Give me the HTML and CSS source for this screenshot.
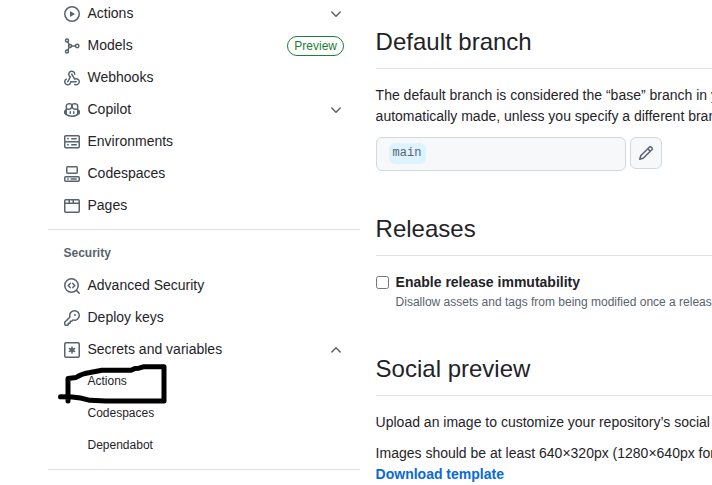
FILE: index.html
```html
<!DOCTYPE html>
<html lang="en">
<head>
<meta charset="utf-8">
<title>Settings</title>
<link rel="stylesheet" href="styles.css">
</head>
<body>
<div class="page">
  <nav class="sidebar">
    <ul class="nav-list">
      <li class="nav-item"><svg class="icon" viewBox="0 0 16 16"><path d="M8 0a8 8 0 1 1 0 16A8 8 0 0 1 8 0ZM1.5 8a6.5 6.5 0 1 0 13 0 6.5 6.5 0 0 0-13 0Zm4.879-2.773 4.264 2.559a.25.25 0 0 1 0 .428l-4.264 2.559A.25.25 0 0 1 6 10.559V5.442a.25.25 0 0 1 .379-.215Z"/></svg><span>Actions</span><svg class="icon chevron line" viewBox="0 0 16 16"><path d="M3.8 6 8 10.2 12.2 6"/></svg></li>
      <li class="nav-item"><svg class="icon line" viewBox="0 0 16 16"><circle cx="3" cy="2.4" r="1.5"/><circle cx="3" cy="13.6" r="1.5"/><circle cx="6" cy="8" r="1.5"/><circle cx="13.2" cy="8" r="1.7"/><path d="M3.7 3.8 5.3 6.6M3.7 12.2 5.3 9.4M7.6 8h3.8"/></svg><span>Models</span><span class="label">Preview</span></li>
      <li class="nav-item"><svg class="icon" viewBox="0 0 16 16"><path d="M5.5 4.25a2.25 2.25 0 0 1 4.5 0 .75.75 0 0 0 1.5 0 3.75 3.75 0 1 0-6.14 2.889l-2.272 4.258a.75.75 0 0 0 1.324.706L7 7.25a.75.75 0 0 0-.309-1.015A2.25 2.25 0 0 1 5.5 4.25Z"/><path d="M7.364 3.607a.75.75 0 0 1 1.03.257l2.608 4.349a3.75 3.75 0 1 1-.628 6.785.75.75 0 0 1 .752-1.299 2.25 2.25 0 1 0-.033-3.88.75.75 0 0 1-1.03-.256L7.107 4.636a.75.75 0 0 1 .257-1.03Z"/><path d="M2.9 8.776A.75.75 0 0 1 2.625 9.8 2.25 2.25 0 1 0 6 11.75a.75.75 0 0 1 .75-.751h5.5a.75.75 0 0 1 0 1.5H7.425a3.75 3.75 0 1 1-5.55-3.998.75.75 0 0 1 1.024.274Z"/></svg><span>Webhooks</span></li>
      <li class="nav-item"><svg class="icon" viewBox="0 0 16 16"><path d="M7.998 15.035c-4.562 0-7.873-2.914-7.998-3.749V9.338c.085-.628.677-1.686 1.588-2.065.013-.07.024-.143.036-.218.029-.183.06-.384.126-.612-.201-.508-.254-1.084-.254-1.656 0-.87.128-1.769.693-2.484.579-.733 1.494-1.124 2.724-1.261 1.206-.134 2.262.034 2.944.765.05.053.096.108.139.165.044-.057.094-.112.143-.165.682-.731 1.738-.899 2.944-.765 1.23.137 2.145.528 2.724 1.261.566.715.693 1.614.693 2.484 0 .572-.053 1.148-.254 1.656.066.228.098.429.126.612.012.076.024.148.037.218.924.385 1.522 1.471 1.591 2.095v1.872c0 .766-3.351 3.795-8.002 3.795Zm0-1.485c2.28 0 4.584-1.11 5.002-1.433V7.862l-.023-.116c-.49.21-1.075.291-1.727.291-1.146 0-2.059-.327-2.71-.991A3.222 3.222 0 0 1 8 6.303a3.24 3.24 0 0 1-.544.743c-.65.664-1.563.991-2.71.991-.652 0-1.236-.081-1.727-.291l-.023.116v4.255c.419.323 2.722 1.433 5.002 1.433ZM6.762 2.83c-.193-.206-.637-.413-1.682-.297-1.019.113-1.479.404-1.713.7-.247.312-.369.789-.369 1.554 0 .793.129 1.171.308 1.371.162.181.519.379 1.442.379.853 0 1.339-.235 1.638-.54.315-.322.527-.827.617-1.553.117-.935-.037-1.395-.241-1.614Zm4.155-.297c-1.044-.116-1.488.091-1.681.297-.204.219-.359.679-.242 1.614.091.726.303 1.231.618 1.553.299.305.784.54 1.638.54.922 0 1.28-.198 1.442-.379.179-.2.308-.578.308-1.371 0-.765-.123-1.242-.37-1.554-.233-.296-.693-.587-1.713-.7Z"/><path d="M6.25 9.037a.75.75 0 0 1 .75.75v1.501a.75.75 0 0 1-1.5 0V9.787a.75.75 0 0 1 .75-.75Zm4.25.75v1.501a.75.75 0 0 1-1.5 0V9.787a.75.75 0 0 1 1.5 0Z"/></svg><span>Copilot</span><svg class="icon chevron line" viewBox="0 0 16 16"><path d="M3.8 6 8 10.2 12.2 6"/></svg></li>
      <li class="nav-item"><svg class="icon" viewBox="0 0 16 16"><path d="M1.75 1h12.5c.966 0 1.75.784 1.75 1.75v4c0 .372-.116.717-.314 1 .198.283.314.628.314 1v4a1.75 1.75 0 0 1-1.75 1.75H1.75A1.75 1.75 0 0 1 0 12.75v-4c0-.358.109-.707.314-1a1.739 1.739 0 0 1-.314-1v-4C0 1.784.784 1 1.75 1ZM1.5 2.75v4c0 .138.112.25.25.25h12.5a.25.25 0 0 0 .25-.25v-4a.25.25 0 0 0-.25-.25H1.75a.25.25 0 0 0-.25.25Zm.25 5.75a.25.25 0 0 0-.25.25v4c0 .138.112.25.25.25h12.5a.25.25 0 0 0 .25-.25v-4a.25.25 0 0 0-.25-.25ZM7 4.75A.75.75 0 0 1 7.75 4h4.5a.75.75 0 0 1 0 1.5h-4.5A.75.75 0 0 1 7 4.75ZM7.75 10h4.5a.75.75 0 0 1 0 1.5h-4.5a.75.75 0 0 1 0-1.5ZM3 4.75A.75.75 0 0 1 3.75 4h.5a.75.75 0 0 1 0 1.5h-.5A.75.75 0 0 1 3 4.75ZM3.75 10h.5a.75.75 0 0 1 0 1.5h-.5a.75.75 0 0 1 0-1.5Z"/></svg><span>Environments</span></li>
      <li class="nav-item"><svg class="icon line" viewBox="0 0 16 16"><rect x="2.75" y=".75" width="10.5" height="6.5" rx="1"/><rect x=".75" y="10.75" width="14.5" height="4.5" rx="1"/><path d="M3.75 13h.5M7.2 13h5"/></svg><span>Codespaces</span></li>
      <li class="nav-item"><svg class="icon line" viewBox="0 0 16 16"><rect x=".75" y="1.75" width="14.5" height="12.5" rx="1"/><path d="M1 5.25h14M5.25 2v3M9.25 2v3"/></svg><span>Pages</span></li>
    </ul>
    <h3 class="nav-heading">Security</h3>
    <ul class="nav-list">
      <li class="nav-item"><svg class="icon line" viewBox="0 0 16 16"><circle cx="7.5" cy="7.5" r="6.75"/><path d="m12.4 12.4 2.9 2.9M6.2 5.4 4.2 7.5l2 2.1M8.8 5.4l2 2.1-2 2.1"/></svg><span>Advanced Security</span></li>
      <li class="nav-item"><svg class="icon" viewBox="0 0 16 16"><path d="M10.5 0a5.499 5.499 0 1 1-1.288 10.848l-.932.932a.749.749 0 0 1-.53.22H7v.75a.749.749 0 0 1-.22.53l-.5.5a.749.749 0 0 1-.53.22H5v.75a.749.749 0 0 1-.22.53l-.5.5a.749.749 0 0 1-.53.22h-2A1.75 1.75 0 0 1 0 14.25v-2c0-.199.079-.389.22-.53l4.932-4.932A5.5 5.5 0 0 1 10.5 0Zm-4 5.5c-.001.431.069.86.205 1.269a.75.75 0 0 1-.181.768L1.5 12.56v1.69c0 .138.112.25.25.25h1.69l.06-.06v-1.19a.75.75 0 0 1 .75-.75h1.19l.06-.06v-1.19a.75.75 0 0 1 .75-.75h1.19l1.023-1.025a.75.75 0 0 1 .768-.18A4 4 0 1 0 6.5 5.5ZM11 6a1 1 0 1 1 0-2 1 1 0 0 1 0 2Z"/></svg><span>Deploy keys</span></li>
      <li class="nav-item"><svg class="icon line" viewBox="0 0 16 16"><rect x=".75" y=".75" width="14.5" height="14.5" rx="1.2"/><path d="M8 5v6M5.4 6.5l5.2 3M10.6 6.5l-5.2 3"/></svg><span>Secrets and variables</span><svg class="icon chevron line" viewBox="0 0 16 16"><path d="M3.8 10 8 5.8l4.2 4.2"/></svg></li>
      <li class="nav-item sub">Actions
        <svg class="scribble" viewBox="0 0 114 44"><path d="M12 36V13.5L20 12.5Q26 8.5 34 7.5L46 5.3H75L79 3.5 83 3.2 88 1.7H108V36H50L34 35.3Q24 32.5 16 32L4.5 31.7"/></svg>
      </li>
      <li class="nav-item sub">Codespaces</li>
      <li class="nav-item sub">Dependabot</li>
    </ul>
  </nav>
  <main class="content">
    <h2>Default branch</h2>
    <p class="branch-text">The default branch is considered the “base” branch in your repository,<br>automatically made, unless you specify a different branch.</p>
    <div class="branch-row">
      <div class="branch-box"><code>main</code></div>
      <button class="edit" aria-label="Rename branch"><svg class="icon" viewBox="0 0 16 16"><path d="M11.013 1.427a1.75 1.75 0 0 1 2.474 0l1.086 1.086a1.75 1.75 0 0 1 0 2.474l-8.61 8.61c-.21.21-.47.364-.756.445l-3.251.93a.75.75 0 0 1-.927-.928l.929-3.25c.081-.286.235-.547.445-.758l8.61-8.61Zm.176 4.823L9.75 4.81l-6.286 6.287a.253.253 0 0 0-.064.108l-.558 1.953 1.953-.558a.253.253 0 0 0 .108-.064Zm1.238-3.763a.25.25 0 0 0-.354 0L10.811 3.75l1.439 1.44 1.263-1.263a.25.25 0 0 0 0-.354Z"/></svg></button>
    </div>
    <h2>Releases</h2>
    <div class="check-row">
      <input type="checkbox" id="immutable">
      <div><label for="immutable">Enable release immutability</label><p class="note">Disallow assets and tags from being modified once a release is published.</p></div>
    </div>
    <h2>Social preview</h2>
    <p class="upload-text">Upload an image to customize your repository’s social media preview.</p>
    <p class="size-text">Images should be at least 640×320px (1280×640px for best display).<br><a>Download template</a></p>
  </main>
</div>
</body>
</html>
```
FILE: styles.css
```css
* { box-sizing: border-box; }
body {
  margin: 0;
  width: 712px;
  height: 485px;
  overflow: hidden;
  background: #fff;
  color: #1f2328;
  font: 14px/21px "Liberation Sans", Arial, sans-serif;
}
h2, h3, p, ul { margin: 0; padding: 0; }
.page { display: flex; gap: 15.6px; height: 485px; overflow: hidden; }
.sidebar { width: 312px; margin-left: 48px; flex: none; }
.nav-list { list-style: none; border-bottom: 1px solid #dfe3e7; }
.nav-list:first-child { margin-top: -3px; padding-bottom: 8px; }
.nav-list:last-child { padding-bottom: 8px; }
.nav-item {
  display: flex;
  align-items: center;
  gap: 7.5px;
  height: 32px;
  padding: 0 16px;
  line-height: 20px;
}
.icon { width: 16px; height: 16px; flex: none; fill: #59636e; position: relative; top: 1px; }
.line { fill: none; stroke: #59636e; stroke-width: 1.5; stroke-linecap: round; stroke-linejoin: round; }
.chevron { margin-left: auto; }
.label {
  margin-left: auto;
  height: 20px;
  padding: 0 6px;
  border: 1px solid #1a7f37;
  border-radius: 10px;
  color: #1a7f37;
  font-size: 12px;
  line-height: 18px;
  position: relative;
  top: 1px;
}
.nav-heading {
  padding: 14px 15.5px 7px;
  color: #59636e;
  font-size: 12px;
  line-height: 18px;
}
.sub { position: relative; padding-left: 39.5px; font-size: 12px; }
.scribble { position: absolute; left: 8px; top: 0; width: 114px; height: 44px; overflow: visible; fill: none; stroke: #000; stroke-width: 5; stroke-linecap: round; stroke-linejoin: round; }
.content { width: 420px; flex: none; padding-top: 24px; }
h2 {
  height: 45px;
  border-bottom: 1px solid #dfe3e7;
  font-size: 24px;
  font-weight: 400;
  line-height: 36px;
}
.content p { white-space: nowrap; }
.branch-text { margin-top: 16px; }
.branch-row { display: flex; gap: 4px; margin: 10px 0 40px; }
.branch-box { width: 250px; height: 34px; padding: 5px 12px; background: #f6f8fa; border: 1px solid #d1d9e0; border-radius: 6px; }
code { display: block; width: 37px; height: 21px; padding: 1px 4px 0; border-radius: 6px; background: #ddf4ff; color: #59636e; font: 12px/19px "Liberation Mono", monospace; }
.edit { width: 32px; height: 32px; padding: 7px; background: #f6f8fa; border: 1px solid #d1d9e0; border-radius: 6px; }
.edit .icon { display: block; top: 0; }
.check-row { display: flex; gap: 7px; margin: 16px 0 34px; height: 45px; }
.check-row input { width: 13px; height: 13px; margin: 4px 0 0; flex: none; }
.check-row label { display: block; font-weight: 700; }
.content .note { margin-top: -1px; color: #59636e; font-size: 12px; }
.upload-text { margin-top: 16px; }
.size-text { margin-top: 10px; }
a { color: #0969da; font-weight: 700; }
```
